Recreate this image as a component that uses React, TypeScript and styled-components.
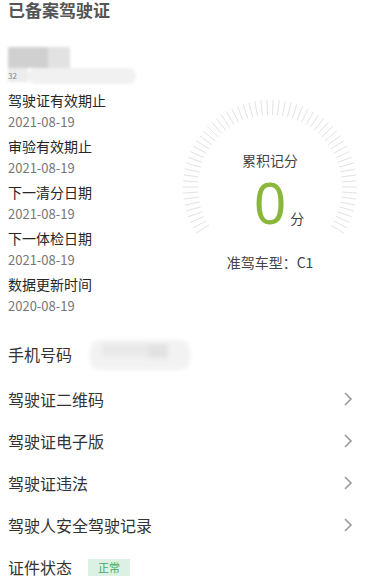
import React from "react";
import styled, { createGlobalStyle } from "styled-components";

const GlobalStyle = createGlobalStyle`
  * { box-sizing: border-box; }
  html, body { margin: 0; padding: 0; background: #fff; }
  body {
    font-family: "Noto Sans CJK SC", "Noto Sans", sans-serif;
    color: #333;
  }
`;

const Page = styled.div`
  width: 369px;
  height: 580px;
  overflow: hidden;
  padding: 0 8px;
  background: #fff;
`;

const Title = styled.div`
  font-size: 17px;
  line-height: 22px;
  font-weight: 700;
  color: #555;
  height: 22px;
  margin-top: -1px;
  margin-bottom: 1px;
`;

const Top = styled.div`
  display: grid;
  grid-template-columns: 172px 1fr;
`;

const InfoCol = styled.div`
  display: flex;
  flex-direction: column;
`;

const Censor = styled.svg`
  display: block;
  margin-top: 22px;
  margin-left: -8px;
`;

const Item = styled.div`
  display: flex;
  flex-direction: column;
  padding-bottom: 4px;
`;

const Label = styled.div`
  font-size: 14px;
  line-height: 21px;
  color: #262626;
`;

const DateText = styled.div`
  font-size: 13px;
  line-height: 21px;
  color: #777;
`;

const DialCol = styled.div`
  padding-top: 75px;
`;

const Dial = styled.div`
  position: relative;
  width: 180px;
  height: 180px;
  display: flex;
  flex-direction: column;
  align-items: center;
  padding-top: 53px;

  & > svg {
    position: absolute;
    inset: 0;
  }
`;

const DialLabel = styled.div`
  position: relative;
  font-size: 14px;
  line-height: 20px;
  color: #444;
`;

const Score = styled.div`
  position: relative;
  display: flex;
  align-items: baseline;
  margin-top: 4px;
  padding-left: 18px;
`;

const ScoreNum = styled.span`
  font-family: "Noto Sans", sans-serif;
  font-size: 57px;
  line-height: 56px;
  color: #8ab63a;
`;

const ScoreUnit = styled.span`
  font-size: 14px;
  color: #444;
  margin-left: 4px;
`;

const Licence = styled.div`
  position: relative;
  margin-top: 22px;
  font-size: 14px;
  line-height: 20px;
  color: #444;
`;

const Rows = styled.div`
  display: flex;
  flex-direction: column;
  margin-top: 10px;
`;

const Row = styled.div<{ $h?: number }>`
  display: flex;
  align-items: center;
  height: ${(p) => p.$h ?? 42}px;
  font-size: 16px;
  color: #333;
`;

const RowLabel = styled.span`
  flex: 1;
`;

const RowStart = styled.div`
  display: flex;
  align-items: center;
  flex: 1;
`;

const PhoneMask = styled.svg`
  margin-left: 14px;
`;

const Chevron = styled.svg`
  margin-right: 8px;
`;

const Badge = styled.span`
  display: inline-flex;
  align-items: center;
  justify-content: center;
  width: 42px;
  height: 17px;
  margin-left: 16px;
  background: #dcf1e3;
  color: #45a86b;
  font-size: 11px;
  line-height: 17px;
`;

const info = [
  ["驾驶证有效期止", "2021-08-19"],
  ["审验有效期止", "2021-08-19"],
  ["下一清分日期", "2021-08-19"],
  ["下一体检日期", "2021-08-19"],
  ["数据更新时间", "2020-08-19"],
];

const links = ["驾驶证二维码", "驾驶证电子版", "驾驶证违法", "驾驶人安全驾驶记录"];

function Ticks() {
  const cx = 90;
  const cy = 90;
  const n = 62;
  const start = -122;
  const end = 122;
  const lines = [];
  for (let i = 0; i < n; i++) {
    const a = ((start + ((end - start) * i) / (n - 1)) * Math.PI) / 180;
    const s = Math.sin(a);
    const c = -Math.cos(a);
    lines.push(
      <line
        key={i}
        x1={cx + s * 72}
        y1={cy + c * 72}
        x2={cx + s * 87}
        y2={cy + c * 87}
        stroke="#e2e2e2"
        strokeWidth="1"
      />
    );
  }
  return (
    <svg width="180" height="180" viewBox="0 0 180 180">
      {lines}
    </svg>
  );
}

function ChevronIcon() {
  return (
    <Chevron width="10" height="16" viewBox="0 0 10 16">
      <polyline points="2,2 8,8 2,14" fill="none" stroke="#9a9a9a" strokeWidth="1.6" />
    </Chevron>
  );
}

export default function App() {
  return (
    <Page>
      <GlobalStyle />
      <Title>已备案驾驶证</Title>
      <Top>
        <InfoCol>
          <Censor width="140" height="46" viewBox="0 0 140 46">
            <defs>
              <filter id="bl" x="-20%" y="-40%" width="140%" height="180%">
                <feGaussianBlur stdDeviation="1.5" />
              </filter>
            </defs>
            <g filter="url(#bl)">
              <rect x="28" y="24" width="108" height="16" rx="8" fill="#f1f1f1" />
              <rect x="8" y="3" width="42" height="21" fill="#d0d0d0" />
              <rect x="48" y="3" width="22" height="21" fill="#e2e2e2" />
              <rect x="8" y="24" width="20" height="14" fill="#ececec" />
            </g>
            <text x="8" y="35" fontSize="8" fill="#888">32</text>
          </Censor>
          {info.map(([l, d]) => (
            <Item key={l}>
              <Label>{l}</Label>
              <DateText>{d}</DateText>
            </Item>
          ))}
        </InfoCol>
        <DialCol>
          <Dial>
            <Ticks />
            <DialLabel>累积记分</DialLabel>
            <Score>
              <ScoreNum>0</ScoreNum>
              <ScoreUnit>分</ScoreUnit>
            </Score>
            <Licence>准驾车型：C1</Licence>
          </Dial>
        </DialCol>
      </Top>
      <Rows>
        <Row $h={48}>
          <RowStart>
            <span>手机号码</span>
            <PhoneMask width="110" height="36" viewBox="0 0 110 36">
              <defs>
                <filter id="bl2" x="-20%" y="-40%" width="140%" height="180%">
                  <feGaussianBlur stdDeviation="2" />
                </filter>
              </defs>
              <g filter="url(#bl2)">
                <rect x="4" y="4" width="100" height="30" rx="10" fill="#f2f2f2" />
                <rect x="16" y="8" width="50" height="12" fill="#e9e9e9" />
                <rect x="62" y="8" width="20" height="14" fill="#e2e2e2" />
              </g>
            </PhoneMask>
          </RowStart>
        </Row>
        {links.map((t) => (
          <Row key={t}>
            <RowLabel>{t}</RowLabel>
            <ChevronIcon />
          </Row>
        ))}
        <Row>
          <span>证件状态</span>
          <Badge>正常</Badge>
        </Row>
      </Rows>
    </Page>
  );
}
